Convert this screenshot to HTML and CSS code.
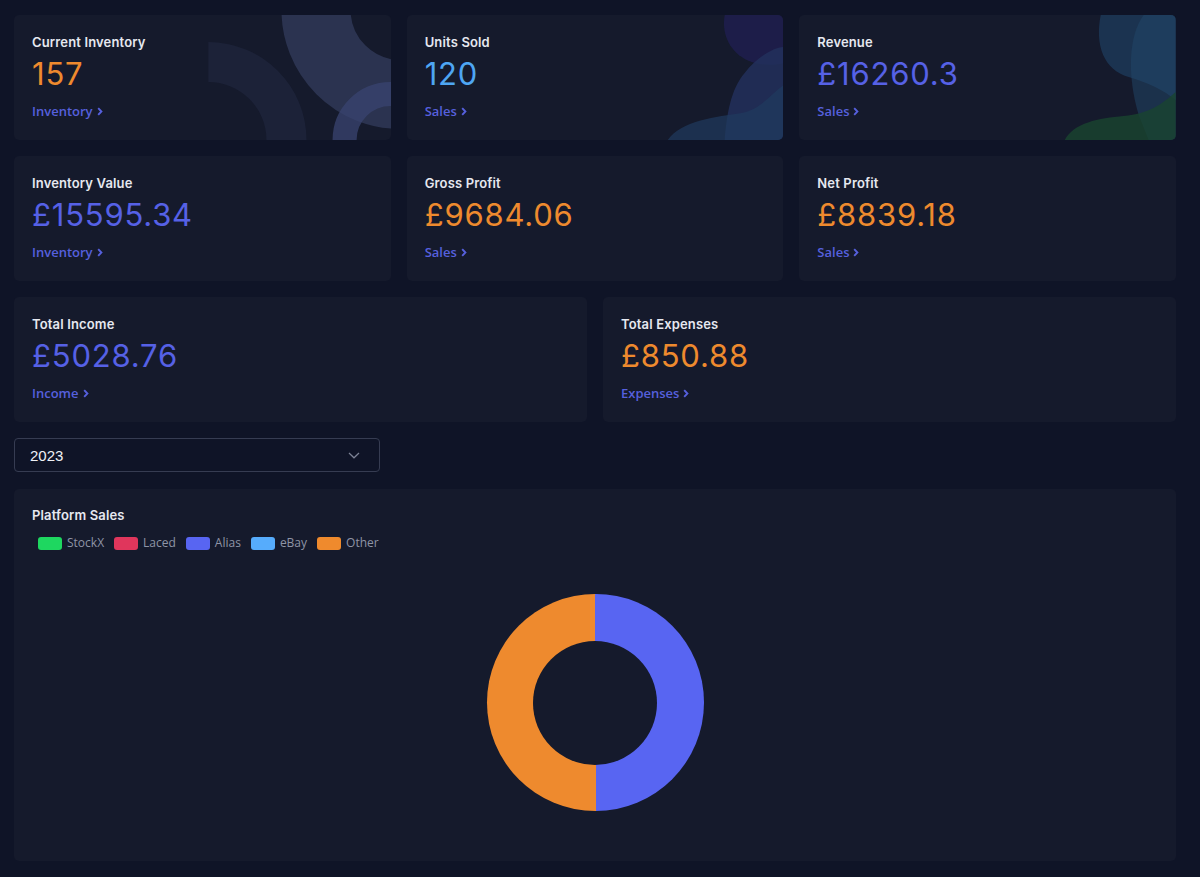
FILE: index.html
```html
<!DOCTYPE html>
<html lang="en">
<head>
<meta charset="utf-8">
<title>Dashboard</title>
<link rel="stylesheet" href="styles.css">
</head>
<body>
<main class="page">
  <section class="row row-3">
    <div class="card">
      <svg class="deco" viewBox="0 0 376 125" preserveAspectRatio="none" aria-hidden="true">
        <path d="M194 27 A98 98 0 0 1 292 125 L252 125 A58 58 0 0 0 194 67 Z" fill="#1c2238"/>
        <circle cx="386" cy="-5" r="84.5" fill="none" stroke="#2b3350" stroke-width="69"/>
        <circle cx="376" cy="125" r="46" fill="none" stroke="#3a4470" stroke-opacity="0.75" stroke-width="24"/>
      </svg>
      <div class="label">Current Inventory</div>
      <div class="value orange">157</div>
      <a class="link" href="#">Inventory <svg class="chev" viewBox="0 0 6 9"><path d="M1.2 1.2 4.4 4.5 1.2 7.8" fill="none" stroke="currentColor" stroke-width="1.9"/></svg></a>
    </div>
    <div class="card">
      <svg class="deco" viewBox="0 0 377 125" preserveAspectRatio="none" aria-hidden="true">
        <path d="M318 0 C314 22 326 42 348 48 C364 52 377 48 377 48 L377 0 Z" fill="#1e1e4c" opacity="0.9"/>
        <path d="M338 58 C350 42 368 32 377 32 L377 125 L318 125 C320 100 324 74 338 58 Z" fill="#22305c" opacity="0.85"/>
        <path d="M261 125 C275 105 310 102 335 98 C355 94 365 78 377 70 L377 125 Z" fill="#1f3a5e" opacity="0.7"/>
      </svg>
      <div class="label">Units Sold</div>
      <div class="value sky">120</div>
      <a class="link" href="#">Sales <svg class="chev" viewBox="0 0 6 9"><path d="M1.2 1.2 4.4 4.5 1.2 7.8" fill="none" stroke="currentColor" stroke-width="1.9"/></svg></a>
    </div>
    <div class="card">
      <svg class="deco" viewBox="0 0 377 125" preserveAspectRatio="none" aria-hidden="true">
        <path d="M302 0 C296 30 305 55 330 62 C350 68 365 75 377 85 L377 0 Z" fill="#1d3a5a" opacity="0.8"/>
        <path d="M345 0 C330 20 328 60 340 100 L350 125 L377 125 L377 0 Z" fill="#22476a" opacity="0.5"/>
        <path d="M266 125 C275 108 300 103 325 101 C350 99 365 88 377 77 L377 125 Z" fill="#19452f" opacity="0.8"/>
      </svg>
      <div class="label">Revenue</div>
      <div class="value indigo">£16260.3</div>
      <a class="link" href="#">Sales <svg class="chev" viewBox="0 0 6 9"><path d="M1.2 1.2 4.4 4.5 1.2 7.8" fill="none" stroke="currentColor" stroke-width="1.9"/></svg></a>
    </div>
  </section>

  <section class="row row-3">
    <div class="card">
      <div class="label">Inventory Value</div>
      <div class="value indigo">£15595.34</div>
      <a class="link" href="#">Inventory <svg class="chev" viewBox="0 0 6 9"><path d="M1.2 1.2 4.4 4.5 1.2 7.8" fill="none" stroke="currentColor" stroke-width="1.9"/></svg></a>
    </div>
    <div class="card">
      <div class="label">Gross Profit</div>
      <div class="value orange">£9684.06</div>
      <a class="link" href="#">Sales <svg class="chev" viewBox="0 0 6 9"><path d="M1.2 1.2 4.4 4.5 1.2 7.8" fill="none" stroke="currentColor" stroke-width="1.9"/></svg></a>
    </div>
    <div class="card">
      <div class="label">Net Profit</div>
      <div class="value orange">£8839.18</div>
      <a class="link" href="#">Sales <svg class="chev" viewBox="0 0 6 9"><path d="M1.2 1.2 4.4 4.5 1.2 7.8" fill="none" stroke="currentColor" stroke-width="1.9"/></svg></a>
    </div>
  </section>

  <section class="row row-2">
    <div class="card">
      <div class="label">Total Income</div>
      <div class="value indigo">£5028.76</div>
      <a class="link" href="#">Income <svg class="chev" viewBox="0 0 6 9"><path d="M1.2 1.2 4.4 4.5 1.2 7.8" fill="none" stroke="currentColor" stroke-width="1.9"/></svg></a>
    </div>
    <div class="card">
      <div class="label">Total Expenses</div>
      <div class="value orange">£850.88</div>
      <a class="link" href="#">Expenses <svg class="chev" viewBox="0 0 6 9"><path d="M1.2 1.2 4.4 4.5 1.2 7.8" fill="none" stroke="currentColor" stroke-width="1.9"/></svg></a>
    </div>
  </section>

  <div class="select">
    <span>2023</span>
    <svg class="select-chev" viewBox="0 0 12 7"><path d="M1 1 6 5.8 11 1" fill="none" stroke="currentColor" stroke-width="1.2"/></svg>
  </div>

  <section class="card chart-card">
    <div class="label">Platform Sales</div>
    <ul class="legend">
      <li><span class="swatch green"></span>StockX</li>
      <li><span class="swatch red"></span>Laced</li>
      <li><span class="swatch blue"></span>Alias</li>
      <li><span class="swatch light"></span>eBay</li>
      <li><span class="swatch orange-bg"></span>Other</li>
    </ul>
    <div class="chart-area">
      <div class="donut"><div class="donut-hole"></div></div>
    </div>
  </section>
</main>
</body>
</html>
```

FILE: styles.css
```css
* { box-sizing: border-box; }

html, body {
  margin: 0;
  padding: 0;
  background: #0f1427;
}

body {
  font-family: "Inter", "Open Sans", sans-serif;
  color: #e8eaf2;
  height: 877px;
  overflow: hidden;
}

.page {
  padding: 15px 24px 0 14px;
  display: flex;
  flex-direction: column;
  gap: 16px;
}

.row {
  display: grid;
  gap: 16px;
}

.row-3 { grid-template-columns: 1fr 1fr 1fr; }
.row-2 { grid-template-columns: 1fr 1fr; }

.card {
  position: relative;
  overflow: hidden;
  background: #151a2c;
  border-radius: 5px;
  height: 125px;
  padding: 18px 18px 0 18px;
  display: flex;
  flex-direction: column;
  align-items: flex-start;
}

.deco {
  position: absolute;
  inset: 0;
  width: 100%;
  height: 100%;
  pointer-events: none;
}

.label, .value, .link { position: relative; }

.label {
  font-size: 13px;
  font-weight: 600;
  line-height: 18px;
  color: #e6e8f0;
  letter-spacing: 0.15px;
}

.value {
  margin-top: 5px;
  font-size: 31px;
  font-weight: 400;
  line-height: 36px;
  letter-spacing: 0.8px;
}

.orange { color: #ee8a2e; }
.sky { color: #4ea6f3; }
.indigo { color: #5661e6; }

.link {
  margin-top: 10px;
  font-family: "Open Sans", sans-serif;
  font-size: 13px;
  font-weight: 600;
  line-height: 18px;
  color: #5660dd;
  text-decoration: none;
  display: inline-flex;
  align-items: center;
  gap: 4px;
}

.chev {
  width: 6px;
  height: 9px;
  margin-top: 1px;
}

.select {
  width: 366px;
  height: 34px;
  border: 1px solid #363c52;
  border-radius: 4px;
  display: flex;
  align-items: center;
  justify-content: space-between;
  padding: 0 19px 0 15px;
  font-family: "Liberation Sans", Arial, sans-serif;
  font-size: 15px;
  color: #eef0f6;
  margin-bottom: 1px;
}

.select-chev {
  width: 12px;
  height: 7px;
  color: #7d8396;
}

.chart-card {
  height: 372px;
  padding-top: 17px;
}

.legend {
  list-style: none;
  margin: 11px 0 0 6px;
  padding: 0;
  display: flex;
  gap: 10px;
  font-family: "Open Sans", sans-serif;
  font-size: 12px;
  line-height: 16px;
  color: #8e94a6;
}

.legend li {
  display: flex;
  align-items: center;
  gap: 5px;
}

.swatch {
  width: 24px;
  height: 13px;
  border-radius: 3px;
  display: inline-block;
}

.green { background: #1ed760; }
.red { background: #e0365c; }
.blue { background: #5865f2; }
.light { background: #56acfc; }
.orange-bg { background: #ef8a2d; }

.chart-area {
  align-self: stretch;
  display: flex;
  justify-content: center;
  margin-top: 43px;
}

.donut {
  width: 217px;
  height: 217px;
  border-radius: 50%;
  background: conic-gradient(#5865f2 0 50%, #ee8a2e 50% 100%);
  display: flex;
  align-items: center;
  justify-content: center;
}

.donut-hole {
  width: 124px;
  height: 124px;
  border-radius: 50%;
  background: #151a2c;
}
```
